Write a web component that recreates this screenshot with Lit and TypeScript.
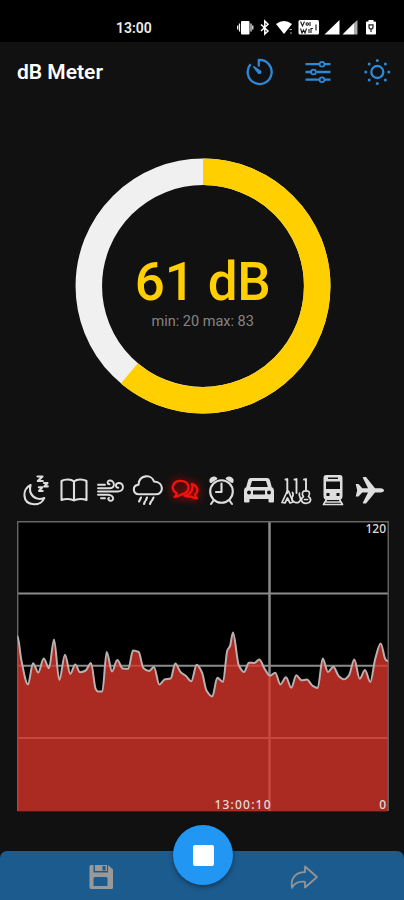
import { LitElement, html, css, svg } from "lit";
import { customElement } from "lit/decorators.js";

type Point = [number, number];

// Level history in chart units (371 x 290), oldest sample first.
const LEVELS: Point[] = [
  [0.5, 115], [4.3, 139], [11, 163.5], [16, 142.3], [21.3, 151.5], [26.7, 137.5], [32, 147.2],
  [37, 118.5], [42.3, 159], [48, 133.7], [53.3, 152.8], [58.3, 143.5], [63, 151.3], [68.7, 149.5],
  [74, 142], [78.7, 168], [81, 170.5], [85.3, 170.5], [89.7, 131], [95, 150.5], [100.3, 139],
  [105.7, 147.5], [111.3, 147.7], [116, 129.5], [121.7, 131], [126.3, 147], [132, 150],
  [137, 146], [142.3, 163.5], [148, 158.3], [153.7, 157.5], [158.3, 142.5], [163.7, 151.3],
  [169, 155], [174.3, 160.3], [179.7, 143.8], [185, 151.5], [189.5, 169.5], [195.3, 175.5],
  [200.3, 156.7], [206, 161], [210.3, 129.5], [213, 125], [216, 111.5], [221.7, 144],
  [227, 151], [232, 141.7], [237.3, 142], [242.3, 138.5], [247.7, 148], [253, 154.7],
  [258.3, 151.7], [263.3, 163.5], [269, 156.3], [274.3, 166.7], [279.3, 154.3], [284.7, 159.3],
  [290, 158.5], [295.3, 164.5], [300.7, 167], [305.7, 137.5], [311, 151], [316.3, 145.7],
  [321.7, 155], [327, 158.3], [332, 154.3], [337.3, 138.5], [342.7, 157.7], [348, 149],
  [353.3, 161], [358.3, 137.5], [363.7, 122.5], [368.5, 138.5], [371, 140],
];

// Monotone cubic interpolation, so that peaks are rounded without overshoot.
function smoothPath(points: Point[]): string {
  const slope = (i: number) =>
    (points[i + 1][1] - points[i][1]) / (points[i + 1][0] - points[i][0]);
  const tangent = points.map((_, i) => {
    if (i === 0 || i === points.length - 1) return 0;
    const a = slope(i - 1);
    const b = slope(i);
    return a * b <= 0 ? 0 : (2 * a * b) / (a + b);
  });
  let d = `M${points[0][0]} ${points[0][1]}`;
  for (let i = 0; i < points.length - 1; i++) {
    const [x0, y0] = points[i];
    const [x1, y1] = points[i + 1];
    const h = (x1 - x0) / 3;
    d += `C${x0 + h} ${y0 + tangent[i] * h} ${x1 - h} ${y1 - tangent[i + 1] * h} ${x1} ${y1}`;
  }
  return d;
}

const SOURCES = [
  { name: "sleep", art: svg`<path d="M12.6 15C4 19 3.7 33.5 15.8 34.2C21 34.4 25 31.5 26.3 28C17.5 31.5 9.8 24.5 12.6 15Z"/><path d="M19.500 6.500h5l-4.700 4.500h5M26 13h3.500l-3.200 3.400h3.500M20.800 17.300h3.500l-3.300 3.700h3.700"/>` },
  { name: "book", art: svg`<path d="M19 11.500C16 9 10 9 6.500 11V30C10 28.500 16 28.500 19 30.500C22 28.500 28 28.500 31.500 30V11C28 9 22 9 19 11.500ZM19 11.500V30"/>` },
  { name: "wind", art: svg`<path stroke-width="1.900" d="M6 18.200H18C24 18 22.500 9.800 17.500 10.500C15 11 15 14 17.500 14.200M6 14.800H13M6 21.500H26C33 21 32 12.500 26.500 13C23 13.500 23.200 17.700 26.300 17.700M6 24.800H16C23 25.500 22 31.500 18 30.700C16 30.300 15.700 28.500 17 27.800M9 28.200H13"/>` },
  { name: "rain", art: svg`<path d="M10 24.300C3.500 24 3 15.500 9.500 14.800C10 4.500 22.500 3.800 25 11.500C35.500 12 35 24.500 26.500 24.300Z"/><path d="M12 27.500l-2 4M18 27.500l-1 2.500M24.500 27.500l-1.500 3M16 31.500l-1 2.500M22 31.500l-1 2.500"/>` },
  { name: "talk", active: true, art: svg`<path stroke-width="2.300" d="M10.800 23.300C3.500 19 7 10.800 14.500 10.800C24 10.800 25.500 21.500 17 23.800C14.500 24.600 12 27 8.500 26.800C10 26 10.800 24.700 10.800 23.300Z"/><path stroke-width="2.300" d="M26 14C32.500 16 32.500 22.500 29 24.500C29 26 30 27.500 31 28.300C27 28.500 26.500 26.800 24.500 26.500C22 27 20 26.500 18.500 25.600M26 14.500C27.800 20 24.500 24 19.500 25.500"/>` },
  { name: "alarm", art: svg`<circle cx="18.500" cy="21.500" r="11.300"/><path d="M18.500 13.500V22H13M10.500 30.500L8 34M26.500 30.500L29 34"/><path fill="#dedede" d="M7.700 12C6.500 8.500 10.500 6.500 13.300 8.500ZM29.300 12C30.500 8.500 26.500 6.500 23.700 8.500Z"/>` },
  { name: "car", art: svg`<path class="solid" fill-rule="evenodd" d="M11 8H27C28.500 8 29.300 8.700 30 10.500L31.800 17.300C33.300 18 34 19 34 21V31.500Q34 32.500 33 32.500H29.500Q28.500 32.500 28.500 31.500V29H9.500V31.500Q9.500 32.500 8.500 32.500H5Q4 32.500 4 31.500V21C4 19 4.700 18 6.200 17.300L8 10.500C8.700 8.700 9.500 8 11 8ZM12 11L10.200 17H27.800L26 11ZM9 20.500A2 2 0 1 0 9 24.500A2 2 0 1 0 9 20.500ZM29 20.500A2 2 0 1 0 29 24.500A2 2 0 1 0 29 20.500ZM13 20.500V24.500H25V20.500Z"/>` },
  { name: "music", art: svg`<path stroke-width="1.900" d="M10.300 9V23M19.500 9V23M29 9V21M8.500 9.500H10.300M17.500 9.500H19.500M27 9.500H29"/><path stroke-width="1.700" d="M10.300 21L5 32.500L8 33L10.500 28L13 33L16 32L11.500 21Z"/><path stroke-width="1.700" d="M15.500 22.500C17 24.500 16 26 15 27.500C14 33.500 23.500 34.500 23.500 29C23.500 26.500 21.500 26 22.500 23"/><path stroke-width="1.700" d="M29 21C25 20.500 24.500 24.500 26.500 26.500C22.500 29.500 25 33.500 29 33.300C34 33.300 35 29 31.500 26.500C33.500 23.500 32.500 20.500 29 21ZM27.500 29.500H30.500"/>` },
  { name: "train", art: svg`<path class="solid" fill-rule="evenodd" d="M12 5H26Q28.500 5 28.500 8V26Q28.500 30 24.500 30H13.500Q9.500 30 9.500 26V8Q9.500 5 12 5ZM14 7.500V9H24V7.500ZM12 11.500V19H26V11.500ZM12.500 23V26H15.500V23ZM22.500 23V26H25.500V23Z"/><path stroke-width="1.700" d="M12.500 29.500L9.500 34.500M25.500 29.500L28.500 34.500M12 32H26M10 34.500H28"/>` },
  { name: "plane", art: svg`<path class="solid" d="M4.700 14H7.500L11.300 18.300H17L11.800 7.800Q11.700 7 12.500 7H15L24 18.300H29.500Q33 18.700 33 20.500Q33 22 29.500 22.500H24L15 33.500H12.500Q11.700 33.500 11.800 32.700L17 22.500H11.300L7.500 26.500H4.700L6.200 20.300Z"/>` },
];

@customElement("db-gauge")
class DbGauge extends LitElement {
  static styles = css`
    :host { display: grid; place-items: center; width: 256px; height: 256px; }
    svg, .reading { grid-area: 1 / 1; }
    svg { display: block; }
    .reading { display: flex; flex-direction: column; align-items: center; padding-top: 9px; font-family: Roboto, sans-serif; }
    .value { color: #ffcf00; font-size: 53px; font-weight: 500; line-height: 62px; letter-spacing: -0.200px; }
    .range { color: #858585; font-size: 14.500px; line-height: 17px; }
  `;
  render() {
    const r = 114.200;
    const around = 2 * Math.PI * r;
    return html`
      <svg width="256" height="256" viewBox="0 0 256 256" fill="none" stroke-width="26.500">
        <circle cx="128" cy="128" r=${r} stroke="#f0f0f0" />
        <circle cx="128" cy="128" r=${r} stroke="#ffcf00" transform="rotate(-90 128 128)"
          stroke-dasharray="${around * 0.611} ${around}" />
      </svg>
      <div class="reading">
        <div class="value">61 dB</div>
        <div class="range">min: 20 max: 83</div>
      </div>`;
  }
}

@customElement("level-chart")
class LevelChart extends LitElement {
  static styles = css`
    :host { display: block; }
    svg { display: block; background: #000; }
    text { font: 500 12px "Noto Sans", sans-serif; fill: #e4dcdc; text-anchor: end; }
  `;
  render() {
    const line = smoothPath(LEVELS);
    return html`
      <svg width="372" height="291" viewBox="0 0 372 291" fill="none">
        <g stroke="#8b8b8b" stroke-width="2">
          <path d="M0 72.500H371M0 144.700H371M0 217H371" />
          <path d="M252.500 0V290" stroke-width="2.500" />
        </g>
        <path d="M0.700 0V290M371.200 0V290M0 0.700H372" stroke="#666" stroke-width="1.400" />
        <path d="${line}V290.500H0.500Z" fill="#d6352a" fill-opacity=".8" />
        <path d=${line} stroke="#b9b1b1" stroke-width="2" stroke-linejoin="round" />
        <text x="369" y="12">120</text>
        <text x="369" y="288">0</text>
        <text x="253.500" y="288" textLength="56">13:00:10</text>
      </svg>`;
  }
}

@customElement("app-root")
class AppRoot extends LitElement {
  static styles = css`
    :host {
      display: flex; flex-direction: column; width: 404px; height: 900px; overflow: hidden;
      background: #111; color: #fff; font-family: Roboto, sans-serif;
    }
    svg { display: block; flex: none; overflow: visible; }
    .status { height: 42px; box-sizing: border-box; padding: 20px 27px 0 116px; background: #000; display: flex; justify-content: space-between; }
    .clock { font-size: 14px; font-weight: 600; line-height: 17px; color: #eee; }
    .indicators { display: flex; fill: #fff; }
    .bar { height: 60px; box-sizing: border-box; padding: 0 13px 0 17px; display: flex; align-items: center; justify-content: space-between; }
    h1 { margin: 0; font-size: 21px; font-weight: 600; }
    .actions { display: flex; gap: 31px; fill: none; stroke: #2d88d6; stroke-width: 2.300; }
    db-gauge { margin: 56px 0 0 74.700px; }
    .sources { display: flex; margin: 56px 0 0 17.500px; height: 45px; }
    .source { fill: none; stroke: #dedede; stroke-width: 2.100; }
    .source .solid { fill: #dedede; stroke: none; }
    .source.active { stroke: #f0140f; filter: drop-shadow(0 0 4px #f00000); }
    level-chart { margin: 6px 0 0 17px; }
    .bottom { margin-top: auto; height: 49px; display: grid; grid-template-columns: 173px 60px 1fr; background: #1c5b8e; border-radius: 7px 7px 0 0; }
    .slot { display: flex; padding-top: 14px; }
    .slot.save { padding-left: 89px; }
    .slot.share { padding-left: 56.500px; }
    .stop {
      width: 60px; height: 60px; margin-top: -26px; border-radius: 50%; background: #2196f3;
      display: grid; place-items: center; box-shadow: 0 2px 5px rgba(0, 0, 0, 0.4);
    }
    .stop span { width: 21px; height: 21px; border-radius: 2px; background: #fff; }
  `;

  render() {
    return html`
      <div class="status">
        <div class="clock">13:00</div>
        <svg class="indicators" width="140" height="16" viewBox="237 20 140 16">
          <rect x="241" y="21" width="8.500" height="13.500" rx="1" />
          <path d="M239.500 23.500v8M251 23.500v8M237.700 25.500v4M252.800 25.500v4" stroke="#fff" stroke-width="1.200" />
          <path d="M261 24.500L268 31L264.800 34V21L268 24.300L261 31" fill="none" stroke="#fff" stroke-width="1.500" />
          <path d="M276 24Q284 18 292 24L284 34Z" /><path d="M289.500 29.500h2.500M290 33h2" stroke="#aaa" />
          <rect x="298.500" y="20" width="20.500" height="14.500" rx="1.500" />
          <g fill="none" stroke="#161616" stroke-width="1.100">
            <path d="M300.500 21.500l2 4.500l2-4.500M306 24a1.200 1.200 0 1 0 2.400 0a1.200 1.200 0 1 0-2.400 0M300.500 28.500l1.500 4.500l1.500-3l1.500 3l1.500-4.500M309 29v4M311 33v-4.500h2M310 22v4M316 24.500v6" />
          </g>
          <path d="M324.500 34.500H339.500V20Z" />
          <path d="M342.500 34.500H354V23Z" /><path d="M354 34.500H357.500V20L354 23Z" fill="#aaa" />
          <path d="M368.500 20h5v1.500h1.500q1 0 1 1V33.500q0 1-1 1h-8q-1 0-1-1V22.500q0-1 1-1h1.500z" />
          <path d="M369 24.800v2.200q0 2 2 2t2-2v-2.200zM371 29v3" fill="none" stroke="#222" stroke-width="1.200" />
        </svg>
      </div>

      <div class="bar">
        <h1>dB Meter</h1>
        <div class="actions">
          <svg width="28" height="28" viewBox="0 0 28 28">
            <path d="M5.500 6.200A12 12 0 1 0 13.800 2V8.500" />
            <path d="M8.500 8.500L15.500 13.200Q16.300 15.800 13.500 15.200Z" fill="#2d88d6" stroke-width="1.500" />
          </svg>
          <svg width="28" height="28" viewBox="0 0 28 28">
            <path d="M1.500 6.200H15M20.500 6.200H26.500M1.500 14H7M12.500 14H26.500M1.500 21.700H15M20.500 21.700H26.500" />
            <g stroke-width="1.800"><circle cx="18" cy="6.200" r="2.400" /><circle cx="9.500" cy="14" r="2.400" /><circle cx="18" cy="21.700" r="2.400" /></g>
          </svg>
          <svg width="28" height="28" viewBox="0 0 28 28">
            <circle cx="14.300" cy="14" r="6" />
            <g fill="#2d88d6" stroke="none">
              <circle cx="14.300" cy="2.500" r="1.500" /><circle cx="14.300" cy="25.500" r="1.500" />
              <circle cx="2.800" cy="14" r="1.500" /><circle cx="25.800" cy="14" r="1.500" />
              <circle cx="6.200" cy="5.900" r="1.500" /><circle cx="22.400" cy="5.900" r="1.500" />
              <circle cx="6.200" cy="22.100" r="1.500" /><circle cx="22.400" cy="22.100" r="1.500" />
            </g>
          </svg>
        </div>
      </div>

      <db-gauge></db-gauge>

      <div class="sources">
        ${SOURCES.map((s) => html`
          <svg class="source ${s.active ? "active" : ""}" width="37" height="40" viewBox="0 0 37 40"
            stroke-linecap="round" stroke-linejoin="round" aria-label=${s.name}>${s.art}</svg>`)}
      </div>

      <level-chart></level-chart>

      <div class="bottom">
        <div class="slot save">
          <svg width="25" height="25" viewBox="0 0 25 25" fill="#999">
            <path fill-rule="evenodd" d="M2 0H4.500V7.500H19V0L24 4.500V22.500Q24 24 22.500 24H2Q.5 24 .5 22.500V1.500Q.5 0 2 0ZM6 12Q4.500 12 4.500 13.500V21H18.500V13.500Q18.500 12 17 12Z" />
            <path fill-rule="evenodd" d="M6 0H18V6H6ZM13.500 1V5.500H16.500V1Z" />
          </svg>
        </div>
        <div class="stop"><span></span></div>
        <div class="slot share">
          <svg width="28" height="25" viewBox="0 0 28 25" fill="none" stroke="#949494" stroke-width="1.800" stroke-linejoin="round">
            <path d="M15 1.500L27 12L15 22.500V16.800C8 16 4 18.500 2 22.800C0 13 6 7.300 15 7Z" />
          </svg>
        </div>
      </div>`;
  }
}
